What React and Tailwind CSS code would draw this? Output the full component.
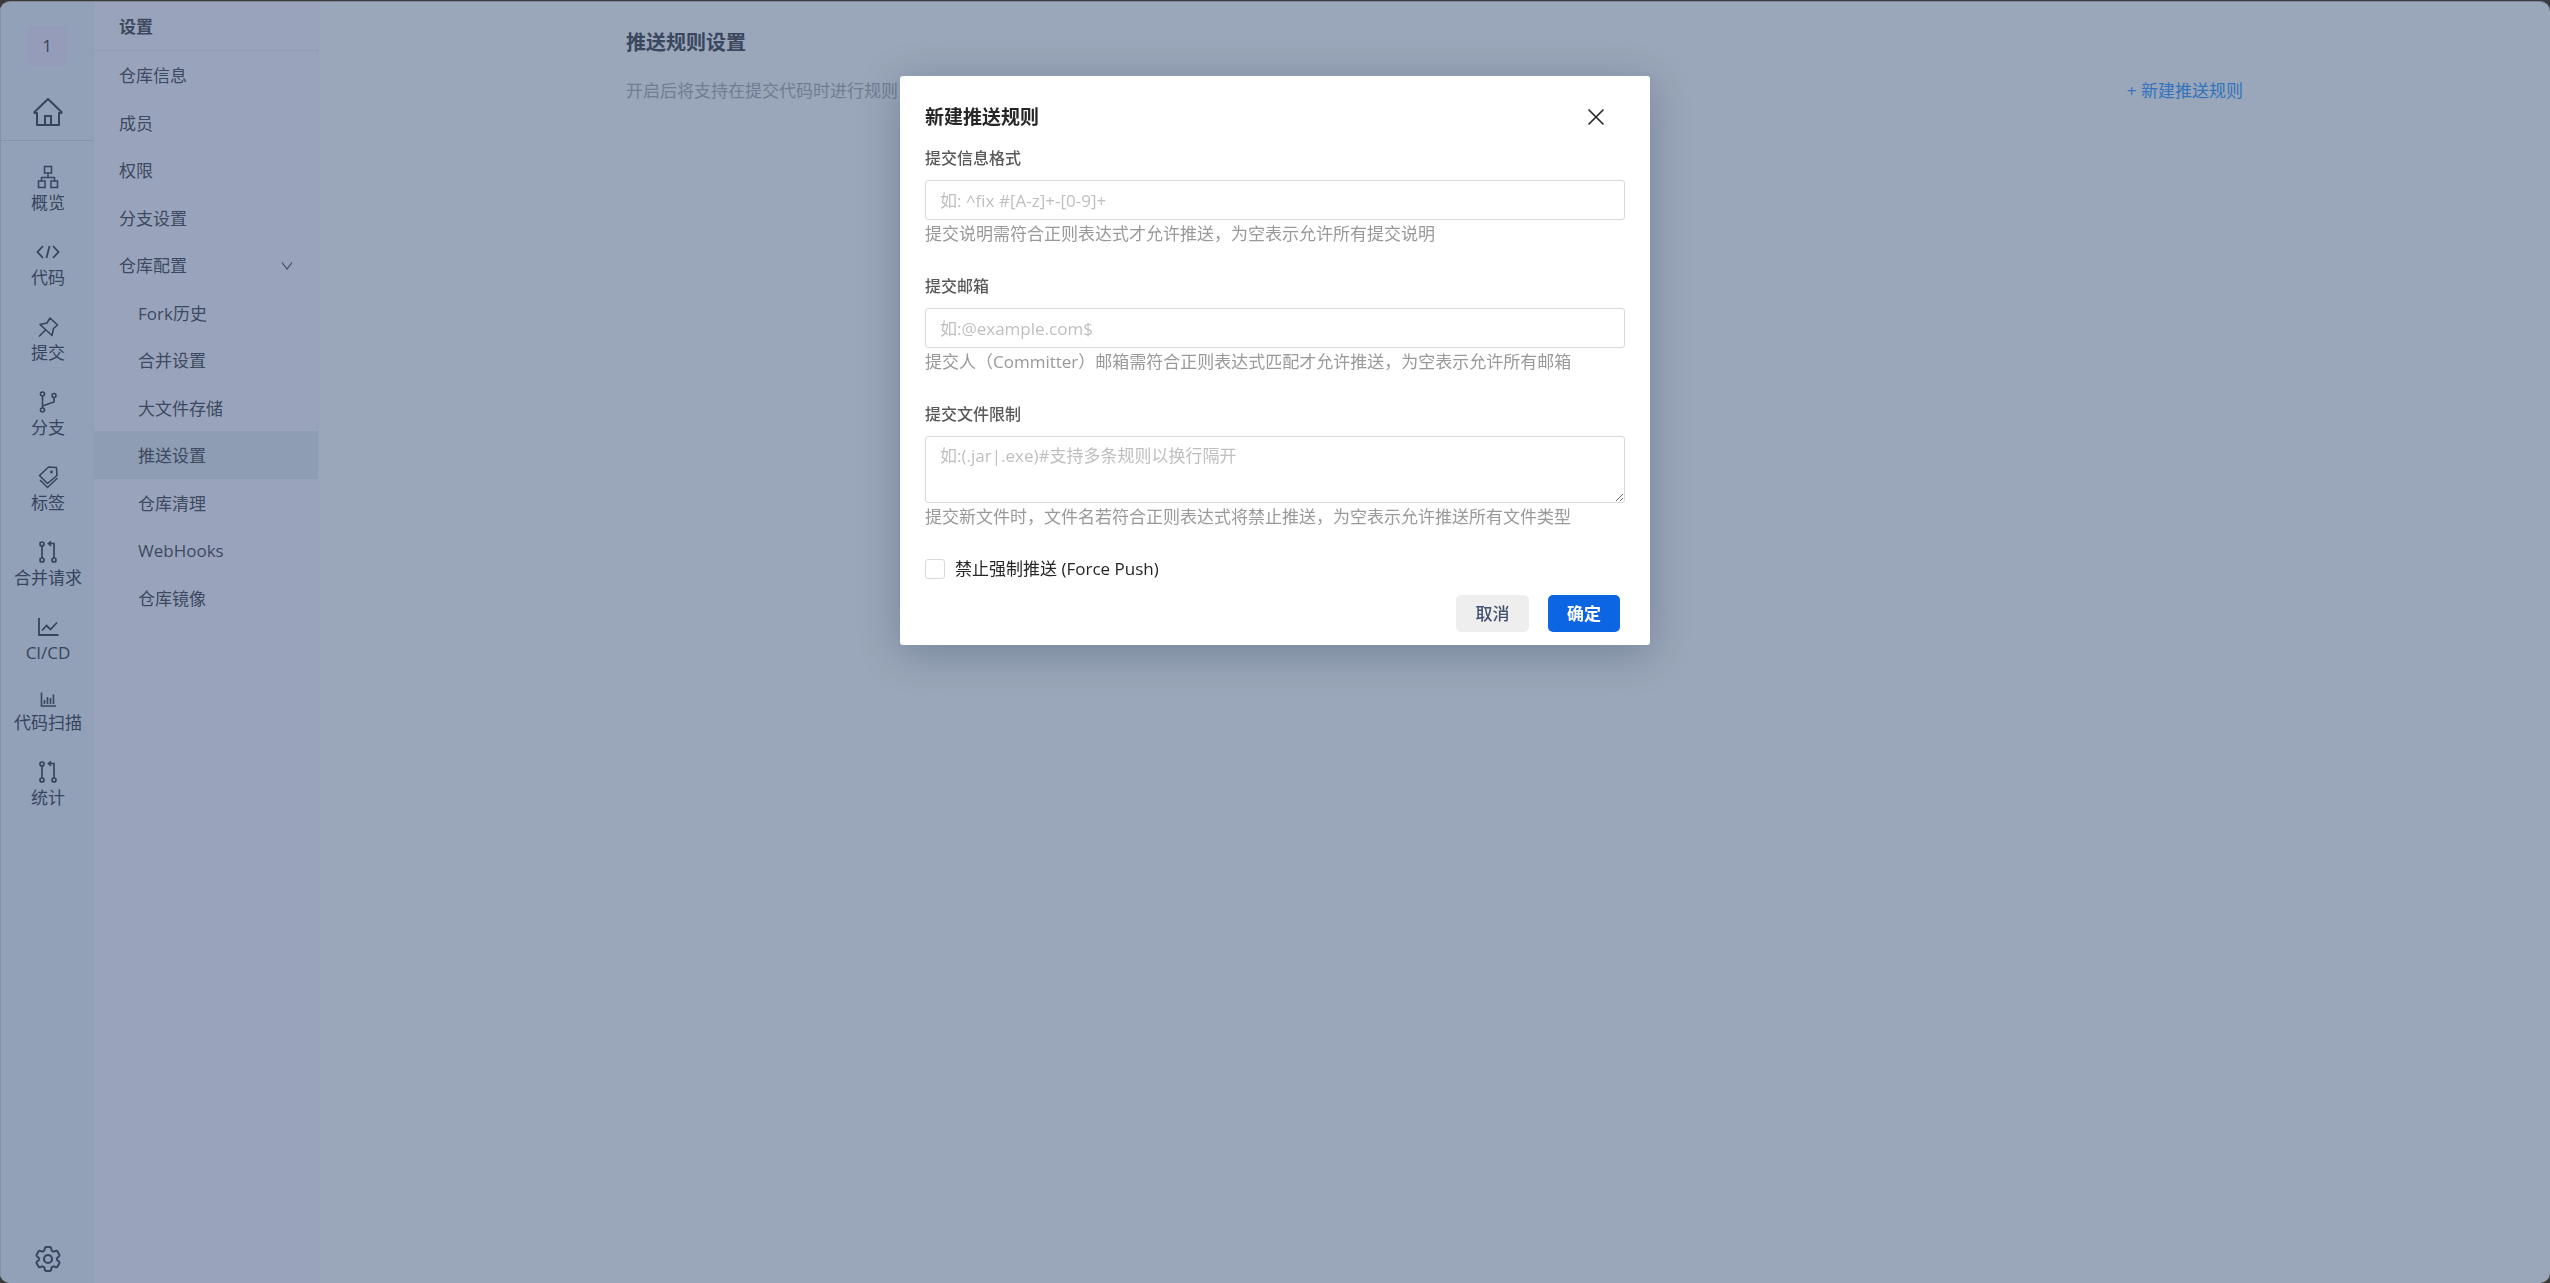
import React, { useState } from "react";
import { HiOutlineCog6Tooth } from "react-icons/hi2";

const FONT = "font-['Open_Sans','Noto_Sans_CJK_SC',sans-serif]";

const Icon = ({ className = "size-6", width = 24, sw = 1.5, children }) => (
  <svg
    className={className}
    viewBox={`0 0 ${width} ${width}`}
    fill="none"
    stroke="currentColor"
    strokeWidth={sw}
    aria-hidden="true"
  >
    {children}
  </svg>
);

const HomeIcon = () => (
  <Icon className="size-8" width={32} sw={2}>
    <path d="M5 17H2.500v-1L16 3l13.500 13v1H27v12H5V17Z" strokeLinejoin="round" />
    <path d="M13 29v-9h6v9" />
  </Icon>
);

const OverviewIcon = () => (
  <Icon>
    <rect x="8.500" y="1.500" width="7" height="6.500" />
    <rect x="2.500" y="16" width="6.500" height="6.500" />
    <rect x="15" y="16" width="6.500" height="6.500" />
    <path d="M12 8v4M5.500 16v-3.500h13V16" />
  </Icon>
);

const CodeIcon = () => (
  <Icon sw={1.8}>
    <path d="m7 6-5.500 6L7 18M17 6l5.500 6-5.500 6M13.500 6l-3 12" />
  </Icon>
);

const PinIcon = () => (
  <Icon sw={1.6}>
    <path d="m14 3 7.500 7-4 3.500-1.500 7-12-11 7-1.500 3-5ZM9.500 15 3 21.500" strokeLinejoin="round" />
  </Icon>
);

const BranchIcon = () => (
  <Icon sw={1.6}>
    <circle cx="6.500" cy="4" r="2" />
    <circle cx="6.500" cy="20" r="2" />
    <circle cx="18" cy="5.500" r="2" />
    <path d="M6.500 6v12M18 7.500V12L6.500 16" />
  </Icon>
);

const TagIcon = () => (
  <Icon sw={1.6}>
    <path d="m12.500 2 8 .5.500 8-9.500 8L3.500 10.500 12.500 2Z" strokeLinejoin="round" />
    <path d="m4 15 7.500 7.500L21.500 13" />
    <circle cx="15.500" cy="7" r=".6" fill="currentColor" />
  </Icon>
);

const MergeIcon = () => (
  <Icon sw={1.7}>
    <circle cx="6" cy="4" r="2" />
    <circle cx="6" cy="20" r="2" />
    <circle cx="18" cy="20" r="2" />
    <path d="M6 6v12M18 18V3.500h-5.500M15 1.500l-2.500 2 2.500 2.500" />
  </Icon>
);

const LineChartIcon = () => (
  <Icon sw={1.8}>
    <path d="M3 3v17h19.500M6 15.500l4.500-5 4 4 6.500-7" />
  </Icon>
);

const BarChartIcon = () => (
  <Icon className="h-[19px] w-4" width={16} sw={1.6}>
    <path d="M1.500 1v13.500H16M4.500 12.500V8.500M7.500 12.500v-7M10.500 12.500V6.500M13.500 12.500V3" />
  </Icon>
);

const railItems = [
  { label: "概览", icon: OverviewIcon },
  { label: "代码", icon: CodeIcon },
  { label: "提交", icon: PinIcon },
  { label: "分支", icon: BranchIcon },
  { label: "标签", icon: TagIcon },
  { label: "合并请求", icon: MergeIcon },
  { label: "CI/CD", icon: LineChartIcon },
  { label: "代码扫描", icon: BarChartIcon },
  { label: "统计", icon: MergeIcon },
];

const menuItems = ["仓库信息", "成员", "权限", "分支设置"];
const configItems = ["Fork历史", "合并设置", "大文件存储", "推送设置", "仓库清理", "WebHooks", "仓库镜像"];

const Rail = () => (
  <nav className="flex w-[94px] shrink-0 flex-col items-center border-x border-l-[#8592a8] border-r-[#8e9cb4] bg-[#92a0b8] text-[#37455c]">
    <div className="flex w-full flex-col items-center border-b border-[#8391a9] pt-6 pb-3">
      <a href="#project" className="flex size-10 items-center justify-center rounded-md bg-[#959cba]">
        1
      </a>
      <a href="#home" aria-label="首页" className="mt-[30px] ml-[2px]">
        <HomeIcon />
      </a>
    </div>
    <div className="flex flex-col pt-px pl-[2px]">
      {railItems.map(({ label, icon: ItemIcon }) => (
        <a key={label} href={`#${label}`} className="flex flex-col items-center pt-[23px] leading-7">
          <ItemIcon />
          {label}
        </a>
      ))}
    </div>
    <a href="#settings" aria-label="设置" className="mt-auto mb-2 ml-px">
      <HiOutlineCog6Tooth size={32} />
    </a>
  </nav>
);

const SettingsMenu = () => {
  const [open, setOpen] = useState(true);
  const [active, setActive] = useState("推送设置");

  return (
    <aside className="w-[225px] shrink-0 border-r border-[#95a1b8] bg-[#99a4bc] text-[#3d495e]">
      <h2 className="border-b border-[#8f9bb3] pt-[11px] pb-[9px] pl-[25px] leading-7 font-bold">设置</h2>
      <div className="grid h-[570px] grid-rows-12">
        {menuItems.map((item) => (
          <a key={item} href={`#${item}`} className="flex items-center pt-[2px] pl-[25px]">
            {item}
          </a>
        ))}
        <button
          type="button"
          aria-expanded={open}
          onClick={() => setOpen(!open)}
          className="flex items-center justify-between pt-[2px] pr-[25px] pl-[25px] text-left"
        >
          仓库配置
          <Icon className="size-3" width={12} sw={1.1}>
            <path d="m1 2.500 5 6.500 5-6.500" />
          </Icon>
        </button>
        {open &&
          configItems.map((item) => (
            <a
              key={item}
              href={`#${item}`}
              onClick={() => setActive(item)}
              className={`flex items-center pt-[2px] pl-11 ${active === item ? "bg-[#8e9cb4]" : ""}`}
            >
              {item}
            </a>
          ))}
      </div>
    </aside>
  );
};

const Field = ({ id, label, help, children }) => (
  <div className="mb-6">
    <label htmlFor={id} className="mb-2 block text-base leading-7 font-medium text-[#595959]">
      {label}
    </label>
    {children}
    <p className="leading-7 text-[#999]">{help}</p>
  </div>
);

const inputClass =
  "block w-full rounded-[3px] border border-[#d9d9d9] bg-white px-[14px] text-[#262626] placeholder:text-[#bfbfbf] focus:border-[#0c66e4] focus:outline-none";

const PushRuleModal = ({ onClose }) => {
  const [rule, setRule] = useState({ message: "", email: "", files: "", noForce: false });

  const handleChange = (field, value) => {
    setRule((p) => ({ ...p, [field]: value }));
  };

  const handleSubmit = (e) => {
    e.preventDefault();
    onClose();
  };

  return (
    <div className="fixed inset-0 flex items-start justify-center pt-[76px]">
      <form
        role="dialog"
        aria-labelledby="rule-title"
        onSubmit={handleSubmit}
        className="w-[750px] rounded-[3px] bg-white px-[25px] pt-[27px] pb-[13px] shadow-[0_8px_40px_rgba(9,30,66,0.25)]"
      >
        <div className="mb-[13px] flex items-center justify-between pr-5">
          <h3 id="rule-title" className="text-[19px] leading-7 font-bold text-[#262626]">
            新建推送规则
          </h3>
          <button type="button" aria-label="关闭" onClick={onClose} className="text-[#262626]">
            <Icon className="size-[18px]" width={18} sw={1.6}>
              <path d="m1.500 1.500 15 15M16.500 1.500l-15 15" />
            </Icon>
          </button>
        </div>

        <Field id="message" label="提交信息格式" help="提交说明需符合正则表达式才允许推送，为空表示允许所有提交说明">
          <input
            id="message"
            type="text"
            value={rule.message}
            onChange={(e) => handleChange("message", e.target.value)}
            placeholder="如: ^fix #[A-z]+-[0-9]+"
            className={`h-10 ${inputClass}`}
          />
        </Field>

        <Field id="email" label="提交邮箱" help="提交人（Committer）邮箱需符合正则表达式匹配才允许推送，为空表示允许所有邮箱">
          <input
            id="email"
            type="text"
            value={rule.email}
            onChange={(e) => handleChange("email", e.target.value)}
            placeholder="如:@example.com$"
            className={`h-10 ${inputClass}`}
          />
        </Field>

        <Field id="files" label="提交文件限制" help="提交新文件时，文件名若符合正则表达式将禁止推送，为空表示允许推送所有文件类型">
          <textarea
            id="files"
            value={rule.files}
            onChange={(e) => handleChange("files", e.target.value)}
            placeholder="如:(.jar|.exe)#支持多条规则以换行隔开"
            className={`h-[67px] resize-y pt-[5px] leading-7 ${inputClass}`}
          />
        </Field>

        <label className="flex items-center gap-[10px] leading-7 text-[#262626]">
          <input
            type="checkbox"
            checked={rule.noForce}
            onChange={(e) => handleChange("noForce", e.target.checked)}
            className="size-5 appearance-none rounded-[3px] border border-[#d9d9d9] checked:bg-[#0c66e4]"
          />
          禁止强制推送 (Force Push)
        </label>

        <div className="mt-3 flex justify-end gap-[19px] pr-[5px]">
          <button
            type="button"
            onClick={onClose}
            className="h-[37px] w-[73px] rounded-[5px] bg-[#eeeeee] font-medium text-[#42526e]"
          >
            取消
          </button>
          <button type="submit" className="h-[37px] w-[72px] rounded-[5px] bg-[#0c66e4] font-bold text-white">
            确定
          </button>
        </div>
      </form>
    </div>
  );
};

const App = () => {
  const [showModal, setShowModal] = useState(true);

  return (
    <div lang="zh-CN" className={`min-h-screen bg-[#3b3b3b] pt-px text-[17px] ${FONT}`}>
      <div className="flex min-h-[calc(100vh-1px)] overflow-hidden rounded-[10px] border-t border-[#7d8796] bg-[#9aa6b9]">
        <Rail />
        <SettingsMenu />
        <main className="flex-1 px-6">
          <div className="mx-auto max-w-[1617px] pt-[27px]">
            <h1 className="text-xl leading-7 font-bold text-[#3a475f]">推送规则设置</h1>
            <div className="mt-5 flex items-center justify-between leading-7">
              <p className="text-[#6f7d95]">开启后将支持在提交代码时进行规则</p>
              <button type="button" onClick={() => setShowModal(true)} className="text-[#3373bd]">
                + 新建推送规则
              </button>
            </div>
          </div>
        </main>
      </div>
      {showModal && <PushRuleModal onClose={() => setShowModal(false)} />}
    </div>
  );
};

export default App;
